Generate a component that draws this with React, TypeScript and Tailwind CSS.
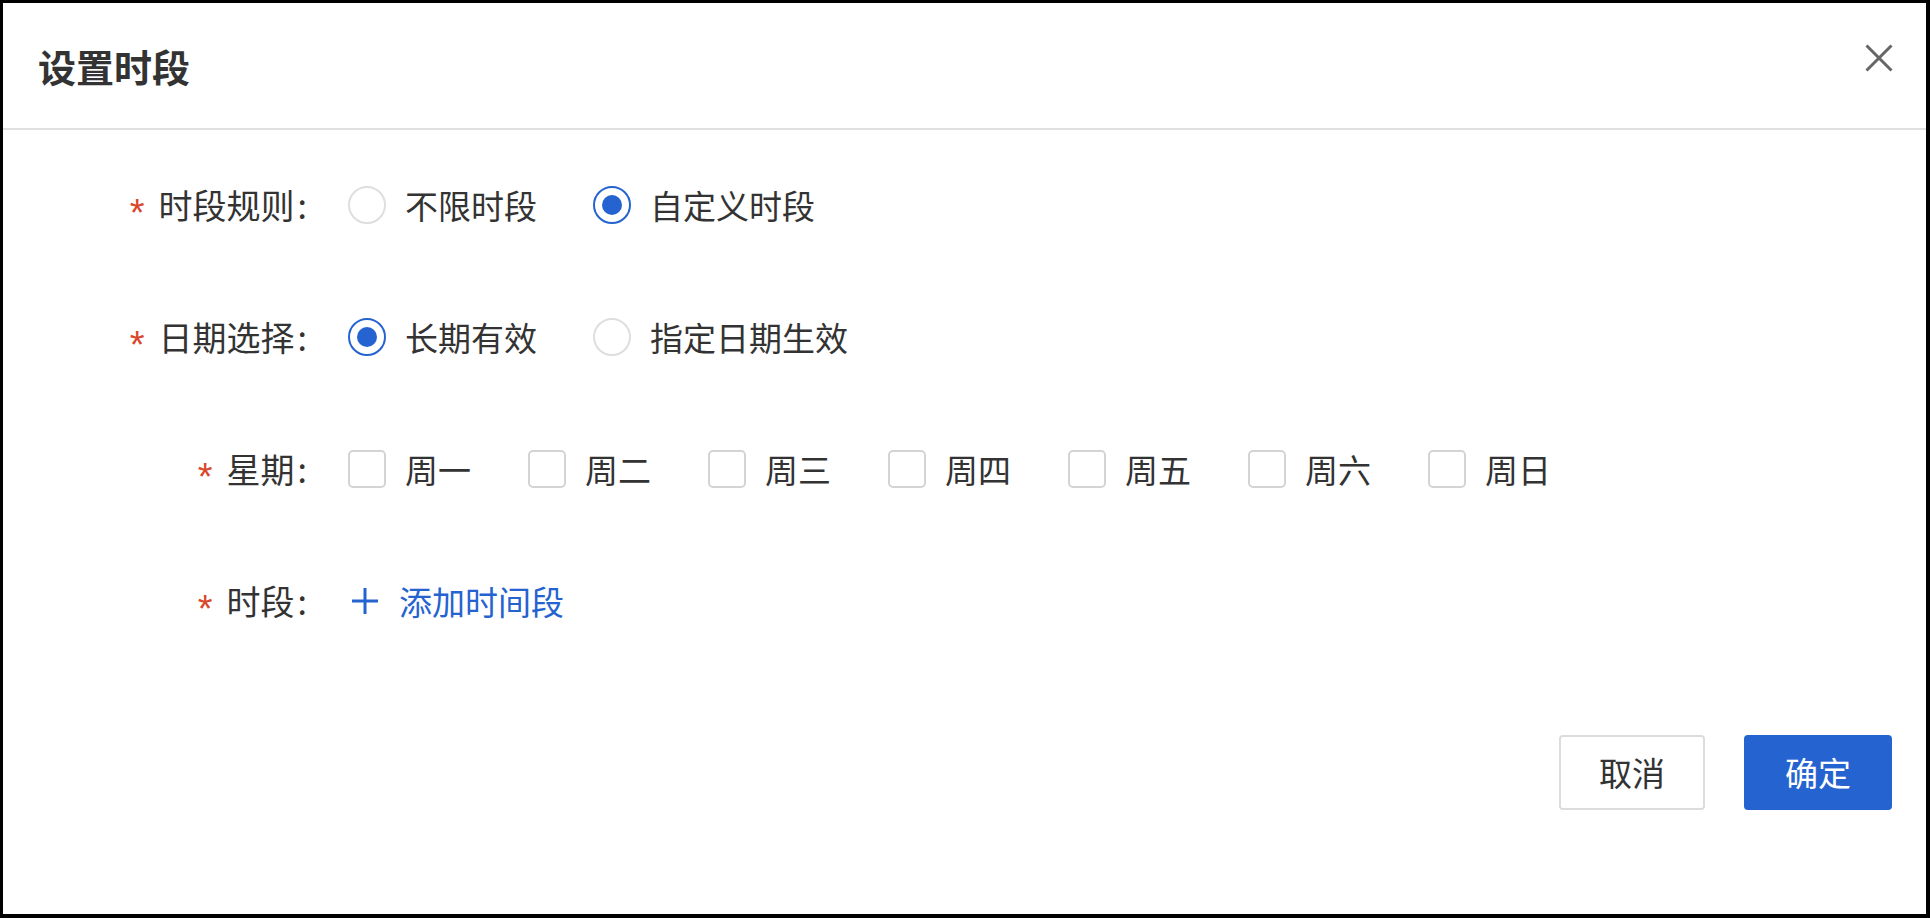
import { useState } from "react";

const BLUE = "#2563d0";

const weekdays = ["周一", "周二", "周三", "周四", "周五", "周六", "周日"];

const Label = ({ text }: { text: string }) => (
  <div className="w-[304px] shrink-0 flex items-center justify-end">
    <span className="font-['Liberation_Sans',sans-serif] text-[38px] leading-none text-[#d9472b] mr-[14px] translate-y-[8px]">
      *
    </span>
    <span className="text-[34px] leading-none text-[#333]">
      {text}
      <span className="ml-[3px]">:</span>
    </span>
  </div>
);

const Radio = ({
  checked,
  label,
  onClick,
}: {
  checked: boolean;
  label: string;
  onClick: () => void;
}) => (
  <button type="button" onClick={onClick} className="flex items-center mr-[56px]">
    <span
      className={
        checked
          ? "w-[38px] h-[38px] rounded-full border-[2.5px] border-[#2563d0] flex items-center justify-center"
          : "w-[38px] h-[38px] rounded-full border-2 border-[#dedede]"
      }
    >
      {checked && <span className="w-[20px] h-[20px] rounded-full bg-[#2563d0]" />}
    </span>
    <span className="ml-[19px] text-[33px] leading-none text-[#333]">{label}</span>
  </button>
);

export default function App() {
  const [rule, setRule] = useState("custom");
  const [dateMode, setDateMode] = useState("long");
  const [days, setDays] = useState<string[]>([]);

  const toggleDay = (d: string) =>
    setDays((prev) => (prev.includes(d) ? prev.filter((x) => x !== d) : [...prev, d]));

  return (
    <div className="w-[1930px] h-[918px] bg-white border-t-[3px] border-l-[3px] border-r-4 border-b-4 border-black flex flex-col font-['Noto_Sans_CJK_SC','Noto_Sans',sans-serif]">
      {/* header */}
      <div className="h-[127px] shrink-0 flex justify-between border-b-2 border-[#e0e0e0] pl-[35px] pr-[33px]">
        <h1 className="self-center text-[38px] leading-none font-semibold text-[#333]">设置时段</h1>
        <button type="button" className="self-start mt-[41px]">
          <svg width="28" height="28" viewBox="0 0 28 28" fill="none">
            <path d="M1.5 1.5 26.5 26.5M26.5 1.5 1.5 26.5" stroke="#666" strokeWidth="3" />
          </svg>
        </button>
      </div>

      {/* form */}
      <div className="flex flex-col gap-[72px] pt-[45px]">
        <div className="h-[60px] flex items-center">
          <Label text="时段规则" />
          <div className="ml-[41px] flex items-center">
            <Radio checked={rule === "all"} label="不限时段" onClick={() => setRule("all")} />
            <Radio checked={rule === "custom"} label="自定义时段" onClick={() => setRule("custom")} />
          </div>
        </div>

        <div className="h-[60px] flex items-center">
          <Label text="日期选择" />
          <div className="ml-[41px] flex items-center">
            <Radio checked={dateMode === "long"} label="长期有效" onClick={() => setDateMode("long")} />
            <Radio checked={dateMode === "range"} label="指定日期生效" onClick={() => setDateMode("range")} />
          </div>
        </div>

        <div className="h-[60px] flex items-center">
          <Label text="星期" />
          <div className="ml-[41px] flex items-center">
            {weekdays.map((d) => (
              <button
                key={d}
                type="button"
                onClick={() => toggleDay(d)}
                className="flex items-center mr-[57px]"
              >
                <span
                  className={
                    days.includes(d)
                      ? "w-[38px] h-[38px] rounded-[5px] border-2 border-[#2563d0] bg-[#2563d0]"
                      : "w-[38px] h-[38px] rounded-[5px] border-2 border-[#d4d4d4]"
                  }
                />
                <span className="ml-[19px] text-[33px] leading-none text-[#333]">{d}</span>
              </button>
            ))}
          </div>
        </div>

        <div className="h-[60px] flex items-center">
          <Label text="时段" />
          <button type="button" className="ml-[45px] flex items-center">
            <svg width="26" height="26" viewBox="0 0 26 26" fill="none">
              <path d="M13 0v26M0 13h26" stroke={BLUE} strokeWidth="3" />
            </svg>
            <span className="ml-[21px] text-[33px] leading-none text-[#2563d0]">添加时间段</span>
          </button>
        </div>
      </div>

      {/* footer */}
      <div className="mt-[104px] flex justify-end gap-[39px] pr-[34px]">
        <button
          type="button"
          className="w-[146px] h-[75px] rounded-[4px] border-2 border-[#dcdcdc] bg-white text-[33px] leading-none text-[#333]"
        >
          取消
        </button>
        <button
          type="button"
          className="w-[148px] h-[75px] rounded-[4px] bg-[#2563d0] text-[33px] leading-none text-white"
        >
          确定
        </button>
      </div>
    </div>
  );
}
